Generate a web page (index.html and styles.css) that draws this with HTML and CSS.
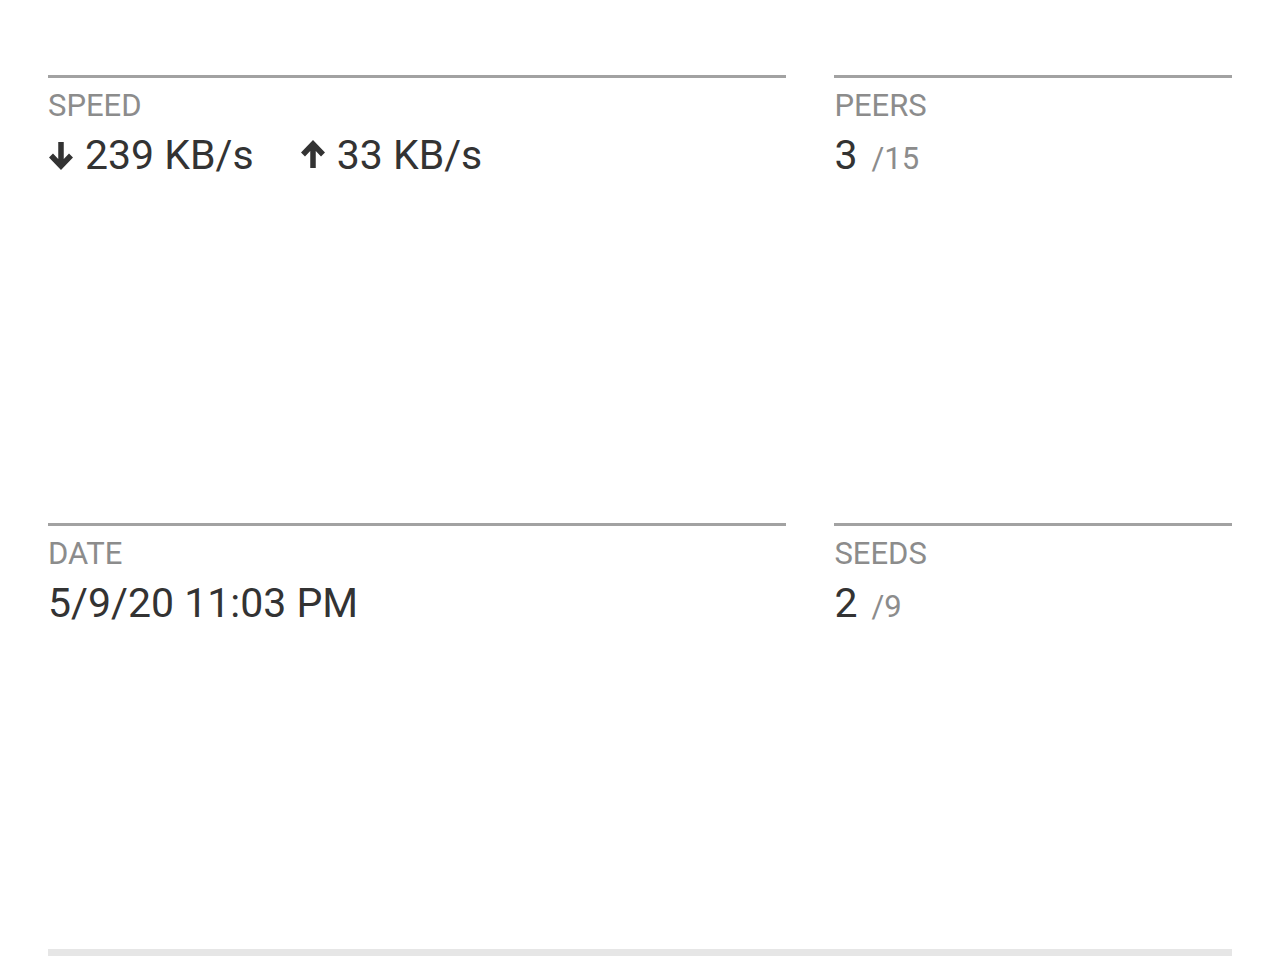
FILE: index.html
```html
<!DOCTYPE html>
<html>
<head>
    <link rel="stylesheet" href="styles.css">
</head>
<body>
<div class="details">
    <div class="stats">
        <div class="stat">
            <div class="stat-label">SPEED</div>
            <div class="stat-value">
                <span class="speed">
                    <svg class="arrow" viewBox="0 0 26 30"><path d="M13 2V26M3 15.5L13 26L23 15.5" /></svg>239 KB/s
                </span>
                <span class="speed">
                    <svg class="arrow" viewBox="0 0 26 30"><path d="M13 28V4M3 14.5L13 4L23 14.5" /></svg>33 KB/s
                </span>
            </div>
        </div>
        <div class="stat">
            <div class="stat-label">PEERS</div>
            <div class="stat-value">3<span class="stat-total">/15</span></div>
        </div>
        <div class="stat stat-low">
            <div class="stat-label">DATE</div>
            <div class="stat-value">5/9/20 11:03 PM</div>
        </div>
        <div class="stat stat-low">
            <div class="stat-label">SEEDS</div>
            <div class="stat-value">2<span class="stat-total">/9</span></div>
        </div>
    </div>
    <div class="footer-bar"></div>
</div>
</body>
</html>
```

FILE: styles.css
```css
body {
    margin: 0;
    padding: 0;
    background-color: #fff;
    font-family: Roboto, "Liberation Sans", sans-serif;
    overflow: hidden;
}

.details {
    padding: 75px 48px 0 48px;
}

.stats {
    display: grid;
    grid-template-columns: 13fr 7fr;
    grid-template-rows: 448px 426px;
    column-gap: 48px;
}

.stat {
    border-top: 3px solid #a2a2a2;
    padding-top: 10px;
}

.stat-label {
    font-size: 31px;
    line-height: 36px;
    color: #8c8c8c;
}

.stat-value {
    margin-top: 7px;
    font-size: 41px;
    line-height: 48px;
    color: #333;
    display: flex;
    align-items: baseline;
}

.speed {
    display: inline-flex;
    align-items: baseline;
    margin-right: 46px;
}

.arrow {
    width: 26px;
    height: 30px;
    margin-right: 11px;
    align-self: center;
    fill: none;
    stroke: #333;
    stroke-width: 5.5;
}

.stat-total {
    font-size: 31px;
    color: #8c8c8c;
    margin-left: 14px;
}

.footer-bar {
    height: 40px;
    background-color: #e6e6e6;
}
```
